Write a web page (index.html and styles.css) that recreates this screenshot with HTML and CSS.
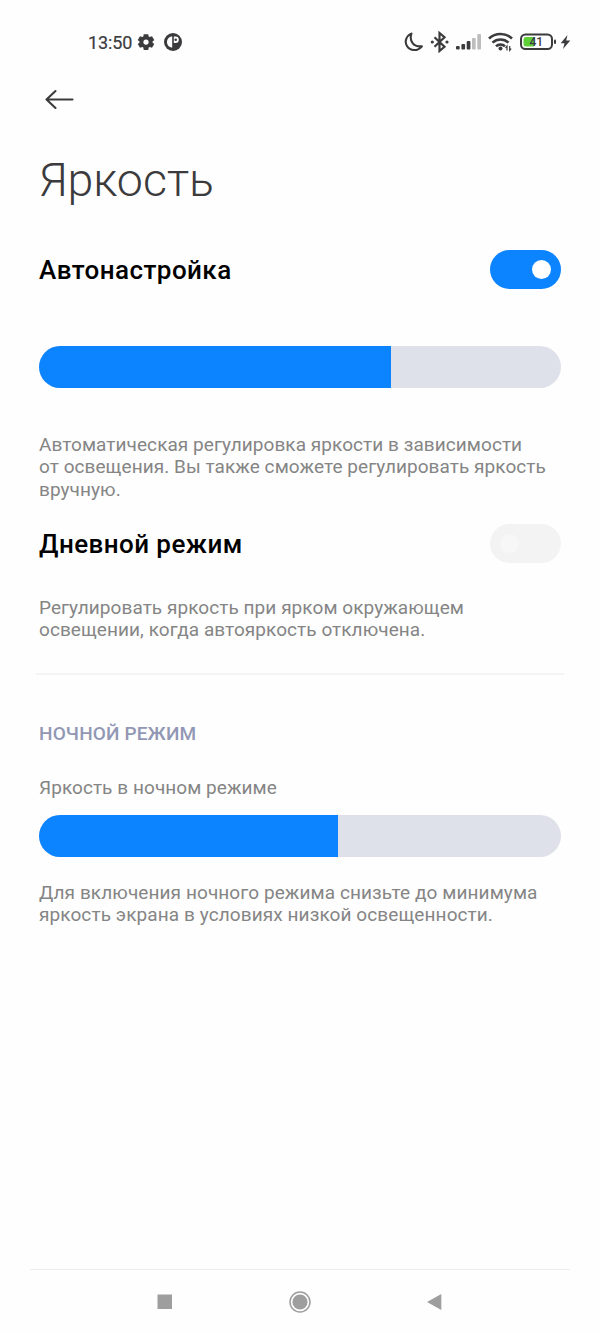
FILE: index.html
```html
<!DOCTYPE html>
<html lang="ru">
<head>
<meta charset="utf-8">
<title>Яркость</title>
<link rel="stylesheet" href="styles.css">
</head>
<body>
<div class="screen">
  <div class="status">
    <div class="status-left">
      <span class="clock">13:50</span>
      <svg class="gear" width="18" height="18" viewBox="0 0 24 24"><path fill="#3b3b3d" fill-rule="evenodd" d="M9 1.500h6l.6 3.100 1.400.8 3-1 3 5-2.400 2.100v1l2.400 2.100-3 5-3-1-1.400.8-.6 3.100H9l-.6-3.100-1.400-.8-3 1-3-5 2.400-2.100v-1L1 9.400l3-5 3 1 1.400-.8zM12 8.500a3.500 3.500 0 1 0 0 7 3.500 3.500 0 0 0 0-7z"/></svg>
      <svg class="app" width="18" height="18" viewBox="0 0 18 18"><circle cx="9" cy="9" r="9" fill="#3b3b3d"/><path d="M8.200 3.500v11C5 14.500 3 12 3 9s2-5.500 5.200-5.500z" fill="#fff"/><path d="M9.800 3.500h1.700a3.300 3.300 0 0 1 0 6.600H9.800z" fill="#fff"/><circle cx="11.700" cy="6.700" r="1.300" fill="#3b3b3d"/></svg>
    </div>
    <div class="status-right">
      <svg width="20" height="20" viewBox="0 0 20 20"><path d="M7.400 1.600C2 4 .3 9.600 3 14c3 5 10.500 5.700 14.900.3C9.500 15.200 5 9 7.400 1.600z" fill="none" stroke="#3b3b3d" stroke-width="2.100" stroke-linejoin="round"/></svg>
      <svg class="bt" width="20" height="22" viewBox="0 0 20 22"><path d="M4.500 6.200l10 9.600-5 4.200V2l5 4.200-10 9.600" fill="none" stroke="#3b3b3d" stroke-width="2.200"/><circle cx="2.300" cy="11" r="1.600" fill="#3b3b3d"/><circle cx="17" cy="11" r="1.600" fill="#3b3b3d"/></svg>
      <svg class="signal" width="26" height="16" viewBox="0 0 26 16"><g fill="#3b3b3d"><rect x="0" y="12" width="3.700" height="3.500" rx="1"/><rect x="5.400" y="10" width="3.700" height="5.500" rx="1"/><rect x="10.700" y="7" width="3.700" height="8.500" rx="1"/></g><g fill="#bdbdbd"><rect x="16" y="4" width="3.700" height="11.500" rx="1"/><rect x="21.300" y="0" width="3.700" height="15.500" rx="1"/></g></svg>
      <svg class="wifi" width="26" height="20" viewBox="0 0 26 20"><g fill="none" stroke="#3b3b3d" stroke-width="2.600"><path d="M1 6.500c6.500-6 16.500-6 23 0"/><path d="M4.500 10.600c4.600-4.200 11.400-4.200 16 0"/><path d="M8 14.300c2.600-2.200 6.400-2.200 9 0"/></g><circle cx="12.500" cy="16.500" r="2" fill="#3b3b3d"/><path d="M19 18.500v-4.300l-1.500 1.700M21.700 14v4.300l1.500-1.700" fill="none" stroke="#3b3b3d" stroke-width="1.200"/></svg>
      <svg class="battery" width="37" height="18" viewBox="0 0 37 18"><rect x="1" y="1.500" width="31" height="14.500" rx="4.500" fill="#fff" stroke="#3b3b3d" stroke-width="2"/><path d="M6 4h8v9.500H6A2.500 2.500 0 0 1 3.500 11V6.500A2.500 2.500 0 0 1 6 4z" fill="#5fd038"/><rect x="34" y="6.500" width="2" height="4.500" rx="1" fill="#3b3b3d"/><text x="9.500" y="12.700" class="charge">41</text></svg>
      <svg width="11" height="16" viewBox="0 0 11 16"><path d="M7.500 1L.7 9.300h3.800L3 15l7.300-8.400H6.200z" fill="#3b3b3d"/></svg>
    </div>
  </div>
  <div class="back"><svg width="30" height="22" viewBox="0 0 30 22"><path d="M27.500 10.500H1.500M10.500 2l-9 8.500 9 8.500" fill="none" stroke="#3b3b3d" stroke-width="2.100" stroke-linecap="round" stroke-linejoin="round"/></svg></div>
  <h1 class="title">Яркость</h1>
  <div class="row"><span class="label">Автонастройка</span><span class="toggle on"><span class="knob"></span></span></div>
  <div class="slider main"><div class="fill" style="width:352px"></div></div>
  <p class="note auto-note">Автоматическая регулировка яркости в зависимости<br>от освещения. Вы также сможете регулировать яркость<br>вручную.</p>
  <div class="row"><span class="label">Дневной режим</span><span class="toggle"><span class="knob"></span></span></div>
  <p class="note day-note">Регулировать яркость при ярком окружающем<br>освещении, когда автояркость отключена.</p>
  <div class="divider"></div>
  <h2 class="section">НОЧНОЙ РЕЖИМ</h2>
  <p class="note caption">Яркость в ночном режиме</p>
  <div class="slider"><div class="fill" style="width:299px"></div></div>
  <p class="note night-note">Для включения ночного режима снизьте до минимума<br>яркость экрана в условиях низкой освещенности.</p>
  <div class="nav">
    <svg width="22" height="22" viewBox="0 0 22 22"><rect x="3.500" y="3.500" width="14.500" height="14.500" fill="#9e9e9e"/></svg>
    <svg width="22" height="22" viewBox="0 0 22 22"><circle cx="11" cy="11" r="10" fill="none" stroke="#9e9e9e" stroke-width="1.500"/><circle cx="11" cy="11" r="7.600" fill="#9e9e9e"/></svg>
    <svg width="22" height="22" viewBox="0 0 22 22"><path d="M3 11L17.300 3v16z" fill="#9e9e9e"/></svg>
  </div>
</div>
</body>
</html>
```
FILE: styles.css
```css
* { box-sizing: border-box; }
body { margin: 0; background: #fefefe; font-family: Roboto, "Noto Sans", sans-serif; }
.screen { width: 600px; height: 1333px; padding: 0 39px; display: flex; flex-direction: column; overflow: hidden; }
.screen > * { flex-shrink: 0; }
svg { display: block; flex: none; }
p, h1, h2 { margin: 0; }
.status { height: 84px; margin: 0 -10px 0 49px; display: flex; align-items: center; justify-content: space-between; }
.status-left, .status-right { display: flex; align-items: center; }
.clock { font-size: 18px; width: 45px; margin-right: 4px; color: #3b3b3d; letter-spacing: -0.1px; -webkit-text-stroke: 0.2px #3b3b3d; }
.app { margin-left: 9px; }
.bt { margin-left: 6px; }
.signal { margin-left: 6px; }
.wifi { margin-left: 6px; }
.battery { margin-left: 6px; margin-right: 3px; }
.charge { font: 500 12px Roboto, sans-serif; fill: #3b3b3d; }
.back { height: 32px; padding: 5px 6px; }
.title { height: 128px; line-height: 128px; font-size: 46.500px; font-weight: 300; color: #3b3b3d; }
.row { height: 50px; display: flex; align-items: center; justify-content: space-between; }
.label { font-size: 26px; font-weight: 500; line-height: 30px; padding-top: 1px; letter-spacing: 0.430px; color: #000; white-space: nowrap; }
.toggle { width: 71px; height: 39px; padding: 10px; border-radius: 20px; background: #f3f3f3; display: flex; align-items: center; }
.toggle.on { background: #0d84ff; justify-content: flex-end; }
.knob { width: 19px; height: 19px; border-radius: 50%; background: #f7f7f7; }
.on .knob { background: #fff; }
.slider { width: 522px; height: 42px; border-radius: 21px; background: #dfe1ea; overflow: hidden; }
.slider.main { margin-top: 52px; }
.fill { height: 100%; background: #0d84ff; }
.note { font-size: 19px; line-height: 22.600px; letter-spacing: 0.060px; color: #858585; white-space: nowrap; }
.auto-note { margin: 45.500px 0 15.500px; height: 69px; }
.day-note { margin-top: 28.500px; height: 46px; }
.divider { height: 2px; margin: 30.500px -3px 0; background: #f4f4f4; }
.section { margin-top: 47px; height: 24px; line-height: 24px; font-size: 19px; font-weight: 500; letter-spacing: 0.150px; color: #9197b4; }
.caption { margin: 31px 0 14.500px; height: 23px; }
.night-note { margin-top: 25px; letter-spacing: 0.090px; }
.nav { margin: auto -9px 0; height: 64px; border-top: 1px solid #ededed; display: flex; justify-content: center; gap: 113px; padding-top: 21px; }
```
